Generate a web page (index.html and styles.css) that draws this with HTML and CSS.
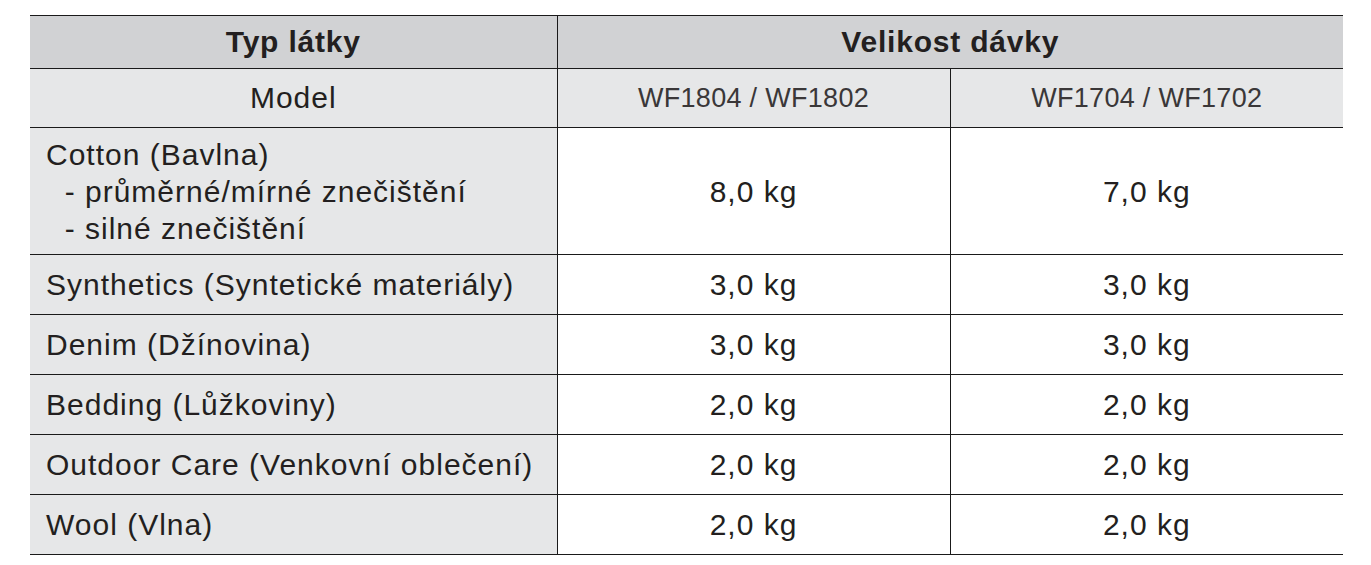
FILE: index.html
```html
<!DOCTYPE html>
<html lang="cs">
<head>
<meta charset="utf-8">
<title>Typ látky</title>
<link rel="stylesheet" href="styles.css">
</head>
<body>
<table class="load">
  <colgroup>
    <col class="c1">
    <col class="c2">
    <col class="c3">
  </colgroup>
  <tr class="head">
    <th>Typ látky</th>
    <th colspan="2">Velikost dávky</th>
  </tr>
  <tr class="model">
    <th>Model</th>
    <td>WF1804 / WF1802</td>
    <td>WF1704 / WF1702</td>
  </tr>
  <tr class="tall">
    <th class="fabric">Cotton (Bavlna)<br>&nbsp;&nbsp;- průměrné/mírné znečištění<br>&nbsp;&nbsp;- silné znečištění</th>
    <td>8,0 kg</td>
    <td>7,0 kg</td>
  </tr>
  <tr>
    <th class="fabric">Synthetics (Syntetické materiály)</th>
    <td>3,0 kg</td>
    <td>3,0 kg</td>
  </tr>
  <tr>
    <th class="fabric">Denim (Džínovina)</th>
    <td>3,0 kg</td>
    <td>3,0 kg</td>
  </tr>
  <tr>
    <th class="fabric">Bedding (Lůžkoviny)</th>
    <td>2,0 kg</td>
    <td>2,0 kg</td>
  </tr>
  <tr>
    <th class="fabric">Outdoor Care (Venkovní oblečení)</th>
    <td>2,0 kg</td>
    <td>2,0 kg</td>
  </tr>
  <tr class="last">
    <th class="fabric">Wool (Vlna)</th>
    <td>2,0 kg</td>
    <td>2,0 kg</td>
  </tr>
</table>
</body>
</html>
```
FILE: styles.css
```css
html, body {
  margin: 0;
  padding: 0;
  background: #ffffff;
}
body {
  padding: 15px 0 0 30px;
  font-family: "Liberation Sans", Arial, sans-serif;
  color: #231f20;
}
.load {
  border-collapse: collapse;
  table-layout: fixed;
  width: 1313px;
}
.c1 { width: 527px; }
.c2 { width: 393px; }
.c3 { width: 393px; }
.load th, .load td {
  border-top: 1px solid #1a1a1a;
  border-bottom: 1px solid #1a1a1a;
  border-left: 1px solid #1a1a1a;
  padding: 0;
  height: 59px;
  text-align: center;
  vertical-align: middle;
  font-size: 30px;
  letter-spacing: 1px;
  line-height: 36px;
}
.load tr > :first-child {
  border-left: none;
}
.load .head th {
  background: #d1d2d4;
  font-weight: bold;
  height: 52px;
  letter-spacing: 0.8px;
}
.load .model th,
.load .model td {
  background: #e6e7e8;
  font-weight: normal;
  height: 58px;
}
.load .model td {
  color: #3a3738;
  font-size: 27px;
  letter-spacing: 0.3px;
}
.load .fabric {
  background: #e6e7e8;
  font-weight: normal;
  text-align: left;
  padding-left: 16px;
}
.load .tall th,
.load .tall td {
  height: 126px;
  line-height: 37px;
}
.load td {
  background-color: #ffffff;
}
```
